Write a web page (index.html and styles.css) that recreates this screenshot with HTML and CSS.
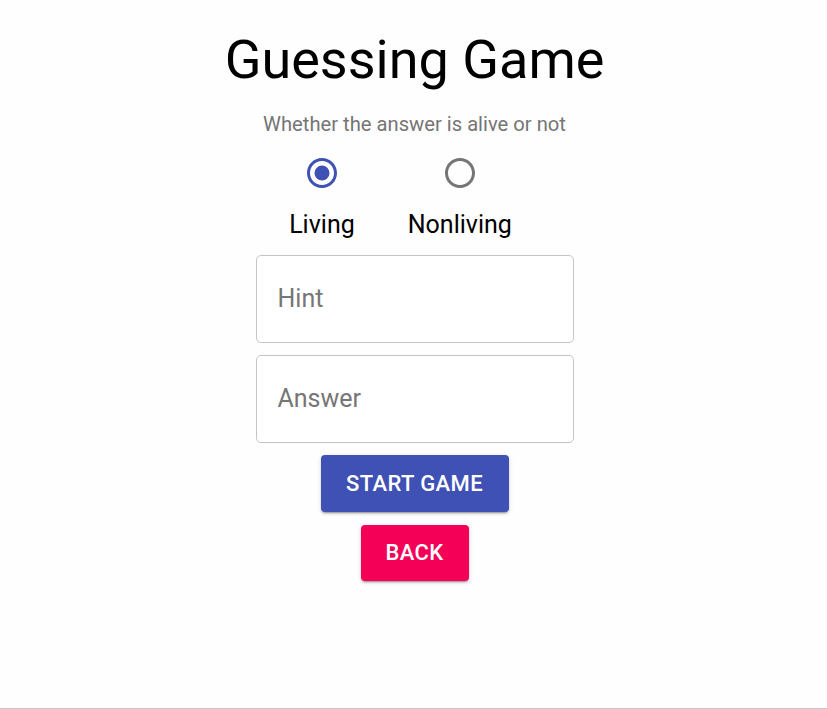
FILE: index.html
```html
<!DOCTYPE html>
<html>
<head>
<meta charset="utf-8">
<link rel="stylesheet" href="styles.css">
</head>
<body>
<div class="page">
  <h1 class="title">Guessing Game</h1>
  <p class="subtitle">Whether the answer is alive or not</p>
  <div class="radios">
    <label class="radio">
      <svg class="radio-icon checked" viewBox="0 0 24 24" width="36" height="36"><path d="M12 2C6.48 2 2 6.480 2 12s4.48 10 10 10 10-4.48 10-10S17.52 2 12 2zm0 18c-4.42 0-8-3.58-8-8s3.58-8 8-8 8 3.58 8 8-3.58 8-8 8z"/><circle cx="12" cy="12" r="5"/></svg>
      <span class="radio-label">Living</span>
    </label>
    <label class="radio">
      <svg class="radio-icon" viewBox="0 0 24 24" width="36" height="36"><path d="M12 2C6.48 2 2 6.48 2 12s4.48 10 10 10 10-4.48 10-10S17.52 2 12 2zm0 18c-4.42 0-8-3.58-8-8s3.58-8 8-8 8 3.58 8 8-3.58 8-8 8z"/></svg>
      <span class="radio-label">Nonliving</span>
    </label>
  </div>
  <div class="field"><input class="input" type="text" placeholder="Hint"></div>
  <div class="field"><input class="input" type="text" placeholder="Answer"></div>
  <button class="btn btn-primary">Start Game</button>
  <button class="btn btn-secondary">Back</button>
</div>
</body>
</html>
```
FILE: styles.css
```css
html, body {
  margin: 0;
  padding: 0;
  background: #fefefe;
}
body {
  font-family: Roboto, "Liberation Sans", sans-serif;
}
.page {
  box-sizing: border-box;
  min-height: 709px;
  border-bottom: 1px solid #c8c8c8;
  display: flex;
  flex-direction: column;
  align-items: center;
  padding-top: 28px;
  padding-left: 2px;
}
.title {
  margin: 0;
  font-size: 54px;
  font-weight: 400;
  line-height: 1.2;
  color: #000;
}
.subtitle {
  margin: 16px 0 0 0;
  font-size: 20.2px;
  line-height: 1.5;
  color: #757575;
}
.radios {
  display: flex;
  gap: 53px;
  margin-top: 16px;
  padding-right: 28px;
}
.radio {
  display: flex;
  flex-direction: column;
  align-items: center;
}
.radio-icon {
  display: block;
  fill: #757575;
}
.radio-icon.checked {
  fill: #3f51b5;
}
.radio-label {
  margin-top: 15px;
  font-size: 25px;
  line-height: 1.5;
  color: #000;
}
.field {
  margin-top: 11px;
}
.field + .field {
  margin-top: 12px;
}
.input {
  display: block;
  box-sizing: border-box;
  width: 318px;
  height: 88px;
  border: 1px solid #c4c4c4;
  border-radius: 5px;
  background: #fff;
  padding: 0 21px;
  font-family: Roboto, "Liberation Sans", sans-serif;
  font-size: 25px;
  color: #000;
  outline: none;
}
.input::placeholder {
  color: #767676;
  opacity: 1;
}
.btn {
  border: none;
  border-radius: 4px;
  color: #fff;
  font-family: Roboto, "Liberation Sans", sans-serif;
  font-size: 22px;
  font-weight: 500;
  text-transform: uppercase;
  letter-spacing: 0.4px;
  box-shadow: 0 3px 1px -2px rgba(0,0,0,0.2), 0 2px 2px 0 rgba(0,0,0,0.14), 0 1px 5px 0 rgba(0,0,0,0.12);
  padding: 0;
}
.btn-primary {
  background: #3f51b5;
  margin-top: 12px;
  width: 188px;
  height: 57px;
}
.btn-secondary {
  background: #f50057;
  margin-top: 13px;
  width: 108px;
  height: 56px;
}
```
